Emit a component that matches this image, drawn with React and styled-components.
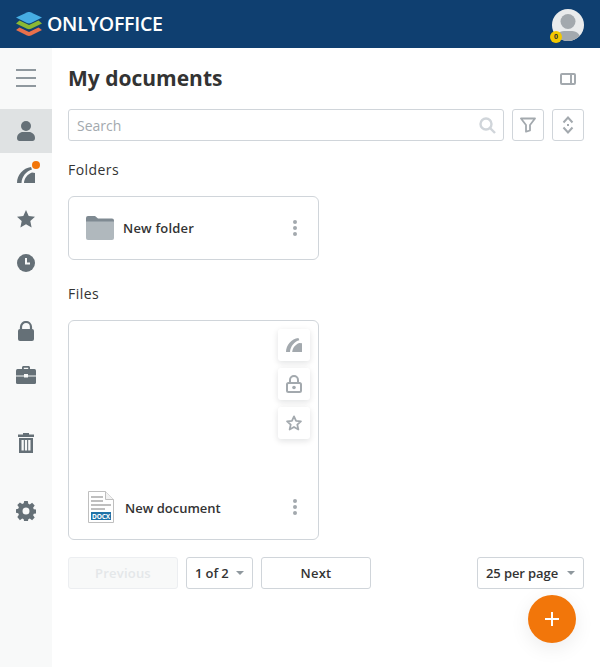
import React from "react";
import styled, { createGlobalStyle } from "styled-components";

const Global = createGlobalStyle`
  html, body { margin: 0; padding: 0; height: 100%; background: #fff; }
  body { font-family: "Open Sans", "Liberation Sans", sans-serif; color: #333; }
  #root { height: 667px; overflow: hidden; }
`;

const Page = styled.div`position: relative; width: 600px; height: 667px; display: flex; flex-direction: column;`;
const Header = styled.header`
  height: 48px; flex: none; background: #0f3f70; display: flex; align-items: center;
  justify-content: space-between; padding: 0 16px;
`;
const Logo = styled.div`display: flex; align-items: center; gap: 5px;`;
const LogoText = styled.span`font-size: 19.6px; font-weight: 600; color: #fff; letter-spacing: -0.3px; line-height: 48px;`;
const AvatarWrap = styled.div`position: relative; width: 32px; height: 32px; margin-bottom: -1px;`;
const Badge = styled.span`
  position: absolute; left: -2px; bottom: -2px; width: 12px; height: 12px; border-radius: 50%;
  background: #f2c900; color: #333; font-size: 7px; font-weight: 700; line-height: 12px; text-align: center;
`;
const Body = styled.div`flex: 1; display: flex; min-height: 0;`;
const Sidebar = styled.nav`width: 52px; flex: none; background: #f8f9f9; display: flex; flex-direction: column; padding-top: 8px;`;
const NavItem = styled.div`
  position: relative; height: 44px; flex: none; display: flex; align-items: center; justify-content: center;
  background: ${(p) => (p.$active ? "#dfe2e3" : "transparent")};
  margin-bottom: ${(p) => p.$after || 0}px;
`;
const Dot = styled.span`
  position: absolute; left: 32px; top: 8px; width: 8px; height: 8px; border-radius: 50%; background: #f2760a;
`;
const Main = styled.main`flex: 1; padding: 0 16px; min-width: 0;`;
const TitleRow = styled.div`height: 61px; display: flex; align-items: center; justify-content: space-between; padding-right: 8px;`;
const Title = styled.h1`margin: 0; font-size: 21px; font-weight: 700; color: #333; line-height: 61px;`;
const SearchRow = styled.div`display: flex; gap: 8px; height: 32px;`;
const SearchBox = styled.div`
  flex: 1; box-sizing: border-box; border: 1px solid #d0d5da; border-radius: 3px; display: flex;
  align-items: center; justify-content: space-between; padding: 0 7px 0 8px;
`;
const Placeholder = styled.span`font-size: 14px; color: #a3a9ae;`;
const IconButton = styled.div`
  width: 32px; height: 32px; box-sizing: border-box; border: 1px solid #d0d5da; border-radius: 3px;
  display: flex; align-items: center; justify-content: center;
`;
const SectionTitle = styled.h2`
  margin: 0; font-size: 14px; font-weight: 500; letter-spacing: 0.45px; color: #333; line-height: 19px; padding-bottom: 17px;
  padding-top: ${(p) => p.$top}px;
`;
const Card = styled.div`
  box-sizing: border-box; width: 251px; border: 1px solid #d0d5da; border-radius: 6px; background: #fff;
`;
const FolderCard = styled(Card)`height: 64px; display: flex; align-items: center; padding: 0 15px 0 17px;`;
const FileCard = styled(Card)`height: 220px; position: relative; display: flex; align-items: flex-end; padding: 0 15px 16px 19px;`;
const ItemName = styled.span`
  flex: 1; font-size: 13px; font-weight: 600; letter-spacing: 0.2px; color: #333; margin-left: ${(p) => p.$gap}px;
  line-height: 18px;
`;
const FileName = styled(ItemName)`padding-top: 2px; letter-spacing: 0;`;
const FileRow = styled.div`display: flex; align-items: center; width: 100%; height: 32px;`;
const Kebab = styled.div`display: flex; flex-direction: column; gap: 2px; width: 4px; margin-right: 6px;`;
const KebabDot = styled.span`width: 4px; height: 4px; border-radius: 50%; background: #a3a9ae;`;
const QuickActions = styled.div`position: absolute; top: 8px; right: 8px; display: flex; flex-direction: column; gap: 7px;`;
const QuickButton = styled.div`
  width: 32px; height: 32px; background: #fff; border-radius: 3px; display: flex; align-items: center; justify-content: center;
  box-shadow: 0 2px 6px rgba(4, 15, 27, 0.12);
`;
const Pager = styled.div`display: flex; align-items: center; gap: 8px; margin-top: 17px;`;
const PagerButton = styled.div`
  box-sizing: border-box; height: 32px; width: ${(p) => p.$w}px; border-radius: 3px;
  border: 1px solid ${(p) => (p.$disabled ? "#eceef1" : "#d0d5da")};
  background: ${(p) => (p.$disabled ? "#f8f9f9" : "#fff")};
  color: ${(p) => (p.$disabled ? "#e4e7e9" : "#333")};
  font-size: 13px; font-weight: 600; letter-spacing: 0.2px; display: flex; align-items: center; justify-content: center;
`;
const PagerSelect = styled.div`
  box-sizing: border-box; height: 32px; border: 1px solid #d0d5da; border-radius: 3px; display: flex; align-items: center;
  justify-content: space-between; width: ${(p) => p.$w}px; padding: 0 8px;
  font-size: 13px; font-weight: 600; letter-spacing: -0.1px; color: #333; margin-left: ${(p) => p.$ml || 0}px;
`;
const Caret = styled.span`width: 0; height: 0; border-left: 4px solid transparent; border-right: 4px solid transparent; border-top: 4px solid #8f989e;`;
const Fab = styled.div`
  position: absolute; left: 528px; top: 595px; width: 48px; height: 48px; border-radius: 50%;
  background: #f2760a; display: flex; align-items: center; justify-content: center;
  box-shadow: 0 5px 20px rgba(4, 15, 27, 0.08);
`;

const G = "#657077";
const S = "#a3a9ae";

const LogoMark = () => (
  <svg width="26" height="24" viewBox="0 0 26 24">
    <path d="M3.500 15.500 13 20l9.500-4.500L26 18l-11 5.500c-1.300.6-2.700.6-4 0L0 18z" fill="#e9704b" />
    <path d="M3.500 8.500 13 13l9.500-4.500L26 11.500l-11 5.200c-1.300.6-2.700.6-4 0L0 11.500z" fill="#8ab833" />
    <path d="M11.500.3 0 5.500 11 11c1.300.6 2.700.6 4 0L26 5.500 14.500.3c-1-.4-2-.4-3 0z" fill="#46ade3" />
  </svg>
);

const Avatar = () => (
  <svg width="32" height="32" viewBox="0 0 32 32">
    <defs><clipPath id="av"><circle cx="16" cy="16" r="16" /></clipPath></defs>
    <circle cx="16" cy="16" r="16" fill="#e9ebec" />
    <g clipPath="url(#av)" fill="#a3a9ae">
      <circle cx="16" cy="12.500" r="7.500" />
      <path d="M3 32c0-6 4-10 9-10h8c5 0 9 4 9 10z" />
    </g>
  </svg>
);

const MenuIcon = () => (
  <svg width="20" height="18" viewBox="0 0 20 18">
    <rect y="0" width="20" height="2" fill="#8f989e" /><rect y="8" width="20" height="2" fill="#8f989e" /><rect y="16" width="20" height="2" fill="#8f989e" />
  </svg>
);
const PersonIcon = () => (
  <svg width="18" height="20" viewBox="0 0 18 20" fill={G}>
    <circle cx="9" cy="5" r="5" /><path d="M0 17c0-3.500 3-6 6-6h6c3 0 6 2.500 6 6 0 1.700-1 3-2.500 3h-13C1 20 0 18.700 0 17z" />
  </svg>
);
const ShareArc = ({ color, size = 18 }) => (
  <svg width={size} height={size * 16 / 18} viewBox="0 0 18 16" fill={color}>
    <path d="M0 16C0 8 6 1 14 0l1 2.600C9.500 4 4.800 9.500 4.500 16z" />
    <path d="M7 16c0-4.500 3.500-9 8-10.500l3 .5v10z" />
  </svg>
);
const StarIcon = () => (
  <svg width="18" height="18" viewBox="0 0 18 18" fill={G}>
    <path d="M9 0l2.700 6 6.300.7-4.700 4.300L14.600 17.500 9 14.300 3.400 17.500 4.700 11 0 6.700 6.300 6z" />
  </svg>
);
const ClockIcon = () => (
  <svg width="18" height="18" viewBox="0 0 18 18">
    <circle cx="9" cy="9" r="9" fill={G} />
    <path d="M9 4v5.500h4" fill="none" stroke="#f8f9f9" strokeWidth="2" />
  </svg>
);
const LockIcon = () => (
  <svg width="16" height="20" viewBox="0 0 16 20" fill={G}>
    <path d="M3 9V6a5 5 0 0 1 10 0v3" fill="none" stroke={G} strokeWidth="2.200" />
    <rect y="8" width="16" height="12" rx="2" />
  </svg>
);
const CaseIcon = () => (
  <svg width="20" height="18" viewBox="0 0 20 18">
    <path d="M6 4V1.500C6 .7 6.700 0 7.500 0h5c.8 0 1.500.7 1.500 1.500V4h-1.800V1.800H7.800V4z" fill={G} />
    <rect y="3" width="20" height="15" rx="1.500" fill={G} />
    <rect y="9.500" width="20" height="1" fill="#f8f9f9" />
    <rect x="8" y="8" width="4" height="3.500" fill="#f8f9f9" />
  </svg>
);
const TrashIcon = () => (
  <svg width="16" height="20" viewBox="0 0 16 20" fill={G}>
    <path d="M5 1.500V0h6v1.500h5V4H0V1.500z" />
    <path fillRule="evenodd" d="M1 5h14v15H1zM3.500 7v10.500h2.300V7zM6.900 7v10.500h2.200V7zM10.200 7v10.500h2.300V7z" />
  </svg>
);
const GearIcon = () => (
  <svg width="20" height="20" viewBox="0 0 20 20" fill={G}>
    <path fillRule="evenodd" d="M8.200 0h3.600l.5 2.700 1.500.7 2.300-1.600 2.600 2.600-1.600 2.300.7 1.500 2.700.5v3.600l-2.700.5-.7 1.500 1.600 2.300-2.600 2.600-2.300-1.600-1.500.7-.5 2.700H8.200l-.5-2.700-1.500-.7-2.300 1.600L1.300 16l1.600-2.300-.7-1.500L-.5 11.700V8.300l2.700-.5.7-1.500L1.300 4l2.600-2.600 2.300 1.600 1.500-.7zM10 6.500a3.500 3.500 0 1 0 0 7 3.500 3.500 0 0 0 0-7z" />
  </svg>
);
const PanelIcon = () => (
  <svg width="16" height="12" viewBox="0 0 16 12">
    <rect x="1" y="1" width="14" height="10" rx="1" fill="none" stroke={S} strokeWidth="2" />
    <rect x="10" y="1" width="2" height="10" fill={S} />
  </svg>
);
const SearchIcon = () => (
  <svg width="17" height="17" viewBox="0 0 17 17" fill="none" stroke="#d0d5da" strokeWidth="2.400">
    <circle cx="7" cy="7" r="5.500" /><path d="M11 11l5 5" />
  </svg>
);
const FilterIcon = () => (
  <svg width="16" height="16" viewBox="0 0 16 16" fill="none" stroke={S} strokeWidth="1.800">
    <path d="M1 1.500h14L10 8v5.500l-4 1.200V8z" strokeLinejoin="round" />
  </svg>
);
const SortIcon = () => (
  <svg width="12" height="18" viewBox="0 0 12 18" fill="none" stroke={S} strokeWidth="2">
    <path d="M1.500 6.500 6 1.500l4.500 5M1.500 11.500 6 16.500l4.500-5" /><rect x="5" y="8" width="2" height="2" fill={S} stroke="none" />
  </svg>
);
const FolderIcon = () => (
  <svg width="28" height="24" viewBox="0 0 28 24">
    <path d="M0 2a2 2 0 0 1 2-2h7l3 2.500h14a2 2 0 0 1 2 2V8H0z" fill="#7f8a92" />
    <path d="M0 5.500h28V22a2 2 0 0 1-2 2H2a2 2 0 0 1-2-2z" fill="#b0b8bd" />
  </svg>
);
const DocxIcon = () => (
  <svg width="26" height="32" viewBox="0 0 26 32">
    <path d="M.5.500h17l8 8v23H.5z" fill="#fff" stroke="#bfbfbf" />
    <path d="M17.500.500v8h8" fill="#f2f2f2" stroke="#bfbfbf" />
    <rect x="3" y="5" width="12" height="2" fill="#bfbfbf" />
    <rect x="3" y="9" width="12" height="2" fill="#bfbfbf" />
    <rect x="3" y="13" width="20" height="2" fill="#bfbfbf" />
    <rect x="3" y="17" width="14" height="2" fill="#bfbfbf" />
    <rect x="3" y="21" width="20" height="8" fill="#1f72a7" />
    <text x="13" y="28" textAnchor="middle" fontFamily="'Open Sans', sans-serif" fontSize="6.500" fontWeight="700" fill="#fff" textLength="18">DOCX</text>
  </svg>
);
const QLock = () => (
  <svg width="16" height="18" viewBox="0 0 16 18" fill="none" stroke={S} strokeWidth="2">
    <path d="M4 8V5a4 4 0 0 1 8 0v3" />
    <rect x="1" y="8" width="14" height="9" rx="1.500" />
    <circle cx="8" cy="12.500" r="1.800" fill={S} stroke="none" />
  </svg>
);
const QStar = () => (
  <svg width="16" height="16" viewBox="0 0 18 18" fill="none" stroke={S} strokeWidth="2" strokeLinejoin="round">
    <path d="M9 1.500l2.300 5 5.500.6-4.100 3.700 1.200 5.500L9 13.500l-4.900 2.800 1.200-5.500-4.100-3.700 5.500-.6z" />
  </svg>
);
const PlusIcon = () => (
  <svg width="14" height="14" viewBox="0 0 14 14" fill="#fff">
    <rect x="6" width="2" height="14" /><rect y="6" width="14" height="2" />
  </svg>
);
const More = () => (
  <Kebab><KebabDot /><KebabDot /><KebabDot /></Kebab>
);

export default function App() {
  return (
    <Page>
      <Global />
      <Header>
        <Logo>
          <LogoMark />
          <LogoText>ONLYOFFICE</LogoText>
        </Logo>
        <AvatarWrap>
          <Avatar />
          <Badge>0</Badge>
        </AvatarWrap>
      </Header>
      <Body>
        <Sidebar>
          <NavItem $after={9}><MenuIcon /></NavItem>
          <NavItem $active><PersonIcon /></NavItem>
          <NavItem><ShareArc color={G} /><Dot /></NavItem>
          <NavItem><StarIcon /></NavItem>
          <NavItem $after={24}><ClockIcon /></NavItem>
          <NavItem><LockIcon /></NavItem>
          <NavItem $after={24}><CaseIcon /></NavItem>
          <NavItem $after={24}><TrashIcon /></NavItem>
          <NavItem><GearIcon /></NavItem>
        </Sidebar>
        <Main>
          <TitleRow>
            <Title>My documents</Title>
            <PanelIcon />
          </TitleRow>
          <SearchRow>
            <SearchBox>
              <Placeholder>Search</Placeholder>
              <SearchIcon />
            </SearchBox>
            <IconButton><FilterIcon /></IconButton>
            <IconButton><SortIcon /></IconButton>
          </SearchRow>
          <SectionTitle $top={19}>Folders</SectionTitle>
          <FolderCard>
            <FolderIcon />
            <ItemName $gap={9}>New folder</ItemName>
            <More />
          </FolderCard>
          <SectionTitle $top={24}>Files</SectionTitle>
          <FileCard>
            <QuickActions>
              <QuickButton><ShareArc color={S} size={16} /></QuickButton>
              <QuickButton><QLock /></QuickButton>
              <QuickButton><QStar /></QuickButton>
            </QuickActions>
            <FileRow>
              <DocxIcon />
              <FileName $gap={11}>New document</FileName>
              <More />
            </FileRow>
          </FileCard>
          <Pager>
            <PagerButton $w={110} $disabled>Previous</PagerButton>
            <PagerSelect $w={67}>1 of 2<Caret /></PagerSelect>
            <PagerButton $w={110}>Next</PagerButton>
            <PagerSelect $w={107} $ml={98}>25 per page<Caret /></PagerSelect>
          </Pager>
        </Main>
      </Body>
      <Fab><PlusIcon /></Fab>
    </Page>
  );
}
